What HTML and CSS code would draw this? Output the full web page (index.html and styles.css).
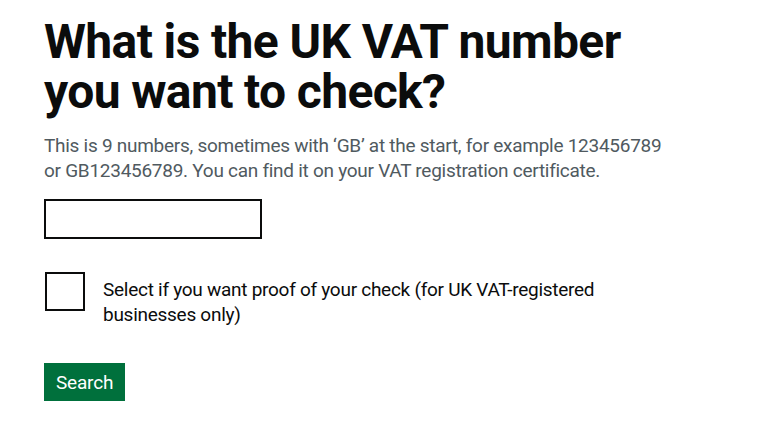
FILE: index.html
```html
<!DOCTYPE html>
<html lang="en">
<head>
<meta charset="utf-8">
<title>What is the UK VAT number you want to check?</title>
<link rel="stylesheet" href="styles.css">
</head>
<body>
<main class="page">
  <form class="form">
    <div class="form-group">
      <h1 class="heading"><label for="vat">What is the UK VAT number you want to check?</label></h1>
      <div class="hint">This is 9 numbers, sometimes with ‘GB’ at the start, for example 123456789 or GB123456789. You can find it on your VAT registration certificate.</div>
      <input class="input" id="vat" type="text">
    </div>
    <div class="checkbox-item">
      <input class="checkbox" id="proof" type="checkbox">
      <label class="checkbox-label" for="proof">Select if you want proof of your check (for UK VAT-registered businesses only)</label>
    </div>
    <button class="button" type="button">Search</button>
  </form>
</main>
</body>
</html>
```
FILE: styles.css
```css
html, body {
  margin: 0;
  padding: 0;
  background: #ffffff;
}
body {
  font-family: Roboto, "Liberation Sans", sans-serif;
  color: #0b0c0c;
}
.page {
  padding: 17px 44px 0 44px;
}
.form {
  display: flex;
  flex-direction: column;
  align-items: flex-start;
}
.form-group {
  display: flex;
  flex-direction: column;
  align-items: flex-start;
}
.heading {
  margin: 0;
  font-size: 48px;
  line-height: 50px;
  font-weight: 700;
  max-width: 640px;
  letter-spacing: -0.63px;
}
.hint {
  margin-top: 16px;
  font-size: 19px;
  line-height: 25px;
  color: #505a5f;
  max-width: 630px;
  letter-spacing: -0.27px;
}
.input {
  margin: 16px 0 0 0;
  box-sizing: border-box;
  width: 218px;
  height: 40px;
  border: 2px solid #0b0c0c;
  border-radius: 0;
  padding: 5px;
  font: inherit;
  font-size: 19px;
}
.checkbox-item {
  margin-top: 33px;
  display: flex;
  align-items: flex-start;
}
.checkbox {
  appearance: none;
  -webkit-appearance: none;
  margin: 0 0 0 1px;
  box-sizing: border-box;
  width: 40px;
  height: 39px;
  border: 2px solid #0b0c0c;
  border-radius: 0;
  background: #fff;
  flex: none;
}
.checkbox-label {
  padding: 5px 15px 5px 18px;
  font-size: 19px;
  line-height: 25px;
  max-width: 500px;
  letter-spacing: -0.27px;
}
.button {
  margin-top: 31px;
  font-family: inherit;
  font-size: 19px;
  line-height: 1;
  padding: 8px 10px 7px;
  border: 2px solid transparent;
  border-radius: 0;
  background: #00703c;
  color: #ffffff;
  letter-spacing: -0.2px;
  box-shadow: 0 2px 0 #002d18;
}
```
